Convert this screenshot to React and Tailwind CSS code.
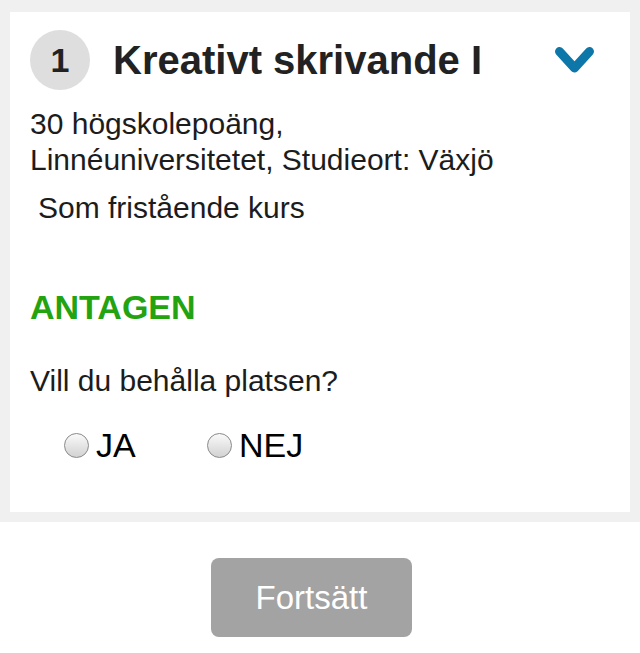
export default function App() {
  return (
    <div
      className="min-h-[653px] bg-white text-[#1c1c1c]"
      style={{ fontFamily: "'Liberation Sans', Arial, sans-serif" }}
    >
      {/* course card */}
      <div className="bg-[#f0f0f0] pt-[12px] px-[10px] pb-[10px]">
        <div className="bg-white pl-[20px] pb-[47px]">

          {/* header */}
          <div className="flex items-center pt-[18px]">
            <div className="w-[60px] h-[60px] rounded-full bg-[#dedede] flex items-center justify-center text-[34px] font-bold text-[#222] leading-none">
              1
            </div>
            <h1 className="ml-[23px] text-[40px] font-bold leading-none text-[#222]">
              Kreativt skrivande I
            </h1>
            <svg
              className="ml-auto mr-[36px]"
              width="39"
              height="26"
              viewBox="0 0 39 26"
              fill="none"
            >
              <polyline
                points="4.5,4.5 19.5,21 34.5,4.5"
                stroke="#0c77a8"
                strokeWidth="9"
                strokeLinecap="round"
                strokeLinejoin="round"
              />
            </svg>
          </div>

          {/* details */}
          <p className="mt-[16px] text-[30px] leading-[36px]">
            30 högskolepoäng,
            <br />
            Linnéuniversitetet, Studieort: Växjö
          </p>
          <p className="mt-[12px] pl-[8px] text-[30px] leading-[36px]">
            Som fristående kurs
          </p>

          {/* status */}
          <p className="mt-[61px] text-[34px] leading-[40px] font-bold text-[#22a30f]">
            ANTAGEN
          </p>
          <p className="mt-[36px] text-[30px] leading-[36px]">
            Vill du behålla platsen?
          </p>

          <div className="mt-[26px] ml-[34px] flex items-center h-[40px] text-[34px] leading-none text-black">
            <label className="w-[143px] flex items-center gap-[7px]">
              <span className="w-[25px] h-[25px] rounded-full border border-[#8a8a8a] bg-linear-to-b from-[#fafafa] to-[#d2d2d2]" />
              JA
            </label>
            <label className="flex items-center gap-[7px]">
              <span className="w-[25px] h-[25px] rounded-full border border-[#8a8a8a] bg-linear-to-b from-[#fafafa] to-[#d2d2d2]" />
              NEJ
            </label>
          </div>

        </div>
      </div>

      {/* footer */}
      <div className="flex justify-center pr-[17px] mt-[36px]">
        <button className="w-[201px] h-[79px] rounded-[8px] bg-[#a3a3a3] text-white text-[33px] leading-none">
          Fortsätt
        </button>
      </div>
    </div>
  )
}
